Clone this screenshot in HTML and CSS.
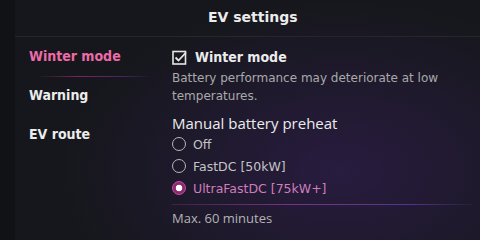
FILE: index.html
```html
<!DOCTYPE html>
<html>
<head>
<meta charset="utf-8">
<link rel="stylesheet" href="styles.css">
</head>
<body>
<div class="screen">
  <div class="edge"></div>
  <div class="main">
    <header class="title">EV settings</header>
    <div class="body">
      <nav class="menu">
        <div class="item active">Winter mode</div>
        <div class="item">Warning</div>
        <div class="item">EV route</div>
      </nav>
      <section class="content">
        <div class="check-row">
          <svg class="checkbox" width="15" height="15" viewBox="0 0 15 15">
            <rect x="1" y="1.5" width="12.5" height="12.5" fill="none" stroke="#e6e6e6" stroke-width="1.6"/>
            <path d="M3.5 7.5 L6.5 10.5 L14 2.5" fill="none" stroke="#e6e6e6" stroke-width="1.8"/>
          </svg>
          <span class="check-label">Winter mode</span>
        </div>
        <p class="desc">Battery performance may deteriorate at low temperatures.</p>
        <div class="group-title">Manual battery preheat</div>
        <div class="radios">
          <div class="radio"><span class="dot"></span><span>Off</span></div>
          <div class="radio"><span class="dot"></span><span>FastDC [50kW]</span></div>
          <div class="radio selected"><span class="dot"></span><span>UltraFastDC [75kW+]</span></div>
        </div>
        <div class="rule"></div>
        <div class="note">Max. 60 minutes</div>
      </section>
    </div>
  </div>
</div>
</body>
</html>
```
FILE: styles.css
```css
html, body {
  margin: 0;
  padding: 0;
  width: 480px;
  height: 240px;
  overflow: hidden;
  background: #16171c;
}
.screen {
  display: flex;
  width: 480px;
  height: 240px;
  background:
    radial-gradient(ellipse 280px 170px at 340px 170px, rgba(48, 30, 78, 0.7), rgba(40, 25, 70, 0) 100%),
    #16171c;
}
.edge {
  width: 15px;
  flex: none;
  background: #111216;
}
.main {
  flex: 1;
  display: flex;
  flex-direction: column;
}
.title {
  height: 37px;
  box-sizing: border-box;
  padding-left: 193px;
  padding-top: 9px;
  font-family: "DejaVu Sans", sans-serif;
  font-weight: bold;
  font-size: 14px;
  color: #ececec;
  border-bottom: 1px solid #26272d;
}
.body {
  display: flex;
  flex: 1;
}
.menu {
  width: 156px;
  flex: none;
  padding-top: 10px;
  display: flex;
  flex-direction: column;
}
.item {
  padding-left: 14px;
  height: 39px;
  box-sizing: border-box;
  font-family: "DejaVu Sans Condensed", "DejaVu Sans", sans-serif;
  font-weight: bold;
  font-size: 14px;
  color: #ececec;
  line-height: 18px;
}
.item.active {
  color: #ee6ba8;
  background: linear-gradient(90deg, rgba(200,50,150,0) 0%, rgba(200,50,140,0.55) 35%, rgba(130,50,190,0.45) 75%, rgba(100,60,200,0) 100%) no-repeat;
  background-size: 115px 1px;
  background-position: 22px 29px;
}
.content {
  flex: 1;
  padding-left: 1px;
  padding-top: 11px;
}
.check-row {
  display: flex;
  align-items: center;
  gap: 8px;
  height: 18px;
}
.checkbox {
  flex: none;
}
.check-label {
  font-family: "DejaVu Sans Condensed", "DejaVu Sans", sans-serif;
  font-weight: bold;
  font-size: 14px;
  color: #ececec;
}
.desc {
  margin: 3px 0 0 0;
  width: 300px;
  font-family: "DejaVu Sans", sans-serif;
  font-size: 12px;
  line-height: 18px;
  color: #a9a9ab;
}
.group-title {
  margin-top: 8px;
  font-family: "Open Sans", sans-serif;
  font-size: 15px;
  line-height: 20px;
  color: #ececec;
}
.radios {
  display: flex;
  flex-direction: column;
}
.radio {
  display: flex;
  align-items: center;
  gap: 7px;
  height: 22px;
  font-family: "DejaVu Sans", sans-serif;
  font-size: 12.5px;
  color: #c4c4c4;
}
.dot {
  width: 12px;
  height: 12px;
  border: 1.5px solid #b8b8b8;
  border-radius: 50%;
  flex: none;
  box-sizing: content-box;
}
.radio.selected {
  color: #cf7dbd;
}
.radio.selected .dot {
  border: 1.5px solid #c0509e;
  background: radial-gradient(circle, #ffffff 0, #ffffff 3px, #8e2870 3.6px, #8e2870 100%);
}
.rule {
  margin-top: 5px;
  width: 300px;
  height: 1px;
  background: linear-gradient(90deg, rgba(160,60,150,0.25), rgba(160,60,170,0.7) 40%, rgba(110,70,200,0.6) 80%, rgba(90,70,200,0.1));
}
.note {
  margin-top: 4px;
  font-family: "Open Sans", sans-serif;
  font-size: 13px;
  line-height: 18px;
  color: #b4b4b6;
}
```
